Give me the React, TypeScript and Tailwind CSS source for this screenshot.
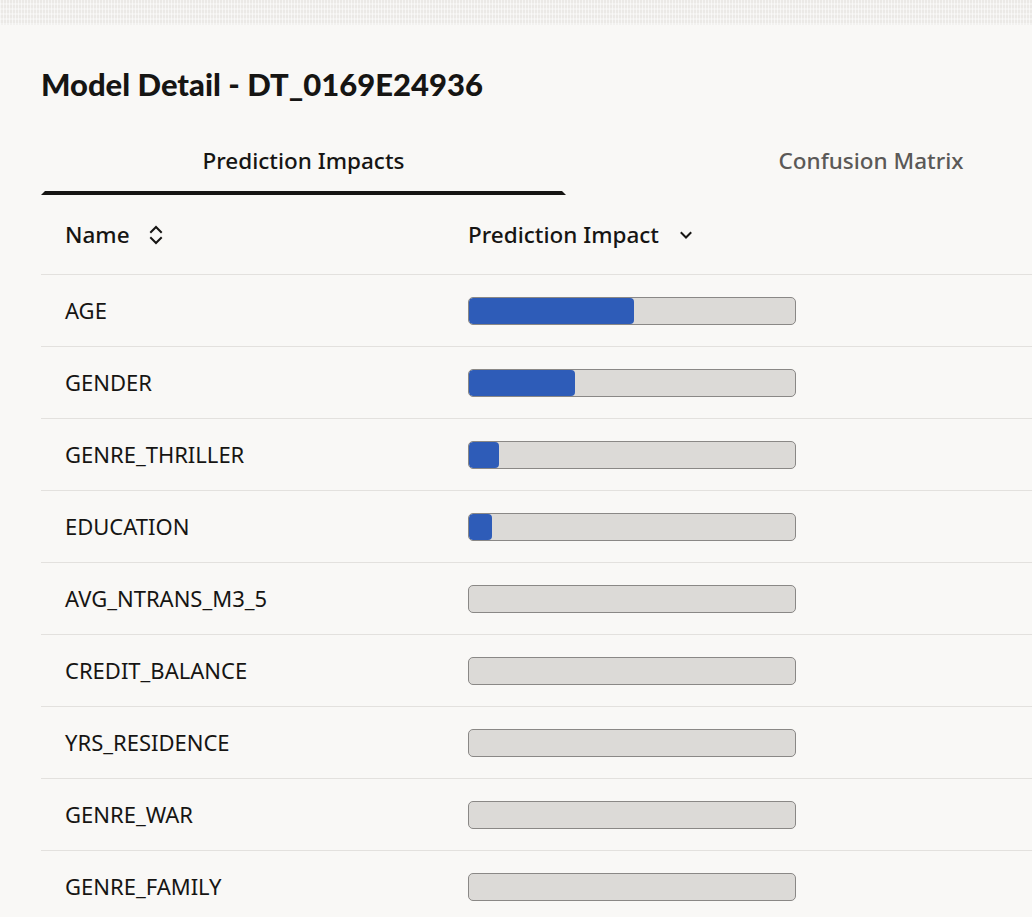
import React from "react";

const rows: { name: string; pct: number }[] = [
  { name: "AGE", pct: 166 },
  { name: "GENDER", pct: 107 },
  { name: "GENRE_THRILLER", pct: 31 },
  { name: "EDUCATION", pct: 24 },
  { name: "AVG_NTRANS_M3_5", pct: 0 },
  { name: "CREDIT_BALANCE", pct: 0 },
  { name: "YRS_RESIDENCE", pct: 0 },
  { name: "GENRE_WAR", pct: 0 },
  { name: "GENRE_FAMILY", pct: 0 },
];

function SortIcon() {
  return (
    <svg width="16" height="22" viewBox="0 0 16 22" fill="none" stroke="#161513" strokeWidth="2" strokeLinecap="square">
      <polyline points="3,8 8,3 13,8" />
      <polyline points="3,14 8,19 13,14" />
    </svg>
  );
}

function ChevronDown() {
  return (
    <svg width="14" height="10" viewBox="0 0 14 10" fill="none" stroke="#161513" strokeWidth="2" strokeLinecap="square">
      <polyline points="2.5,3 7,7.5 11.5,3" />
    </svg>
  );
}

export default function App() {
  return (
    <div
      className="w-[1032px] h-[917px] overflow-hidden bg-[#f9f8f6] text-[#161513]"
      style={{ fontFamily: '"Noto Sans", "Open Sans", sans-serif' }}
    >
      <div
        className="h-[25px] bg-[#ebe9e6]"
        style={{
          backgroundImage:
            "repeating-linear-gradient(90deg, rgba(255,255,255,0.55) 0px, rgba(255,255,255,0.55) 1px, transparent 1px, transparent 3px), repeating-linear-gradient(0deg, rgba(255,255,255,0.35) 0px, rgba(255,255,255,0.35) 2px, transparent 2px, transparent 5px)",
        }}
      />
      <div className="pl-[41px]">
        <h1
          className="pt-[39px] h-[118px] text-[31px] leading-[40px] font-black text-[#161513]"
          style={{ fontFamily: 'Lato, "Noto Sans", sans-serif' }}
        >
          Model Detail - DT_0169E24936
        </h1>
        <div className="flex w-[1200px] h-[52px]">
          <div className="relative w-[525px] flex items-start justify-center pt-[2px]">
            <span className="text-[22.5px] leading-[32px] font-medium text-[#161513]">Prediction Impacts</span>
            <div
              className="absolute left-0 right-0 bottom-0 h-[4px] bg-[#161513]"
              style={{ clipPath: "polygon(4px 0, calc(100% - 4px) 0, 100% 100%, 0 100%)" }}
            />
          </div>
          <div className="w-[610px] flex items-start justify-center pt-[2px]">
            <span className="text-[22.5px] leading-[32px] font-medium text-[#5b5957]">Confusion Matrix</span>
          </div>
        </div>
        <div className="w-[1100px]">
          <div className="flex items-center h-[80px] border-b border-[#e3e1de]">
            <div className="w-[427px] pl-[24px] flex items-center gap-[18px]">
              <span className="text-[22.5px] font-medium">Name</span>
              <SortIcon />
            </div>
            <div className="flex items-center gap-[20px]">
              <span className="text-[22.5px] font-medium">Prediction Impact</span>
              <ChevronDown />
            </div>
          </div>
          {rows.map((r) => (
            <div key={r.name} className="flex items-center h-[72px] border-b border-[#e3e1de]">
              <div className="w-[427px] pl-[24px] text-[22px]">{r.name}</div>
              <div className="relative w-[328px] h-[28px] rounded-[5px] border border-[#8a8886] bg-[#dcdad7] overflow-hidden">
                {r.pct > 0 && (
                  <div
                    className="absolute left-0 top-0 bottom-0 bg-[#2e5cb8] rounded-[4px]"
                    style={{ width: r.pct - 1 }}
                  />
                )}
              </div>
            </div>
          ))}
        </div>
      </div>
    </div>
  );
}
